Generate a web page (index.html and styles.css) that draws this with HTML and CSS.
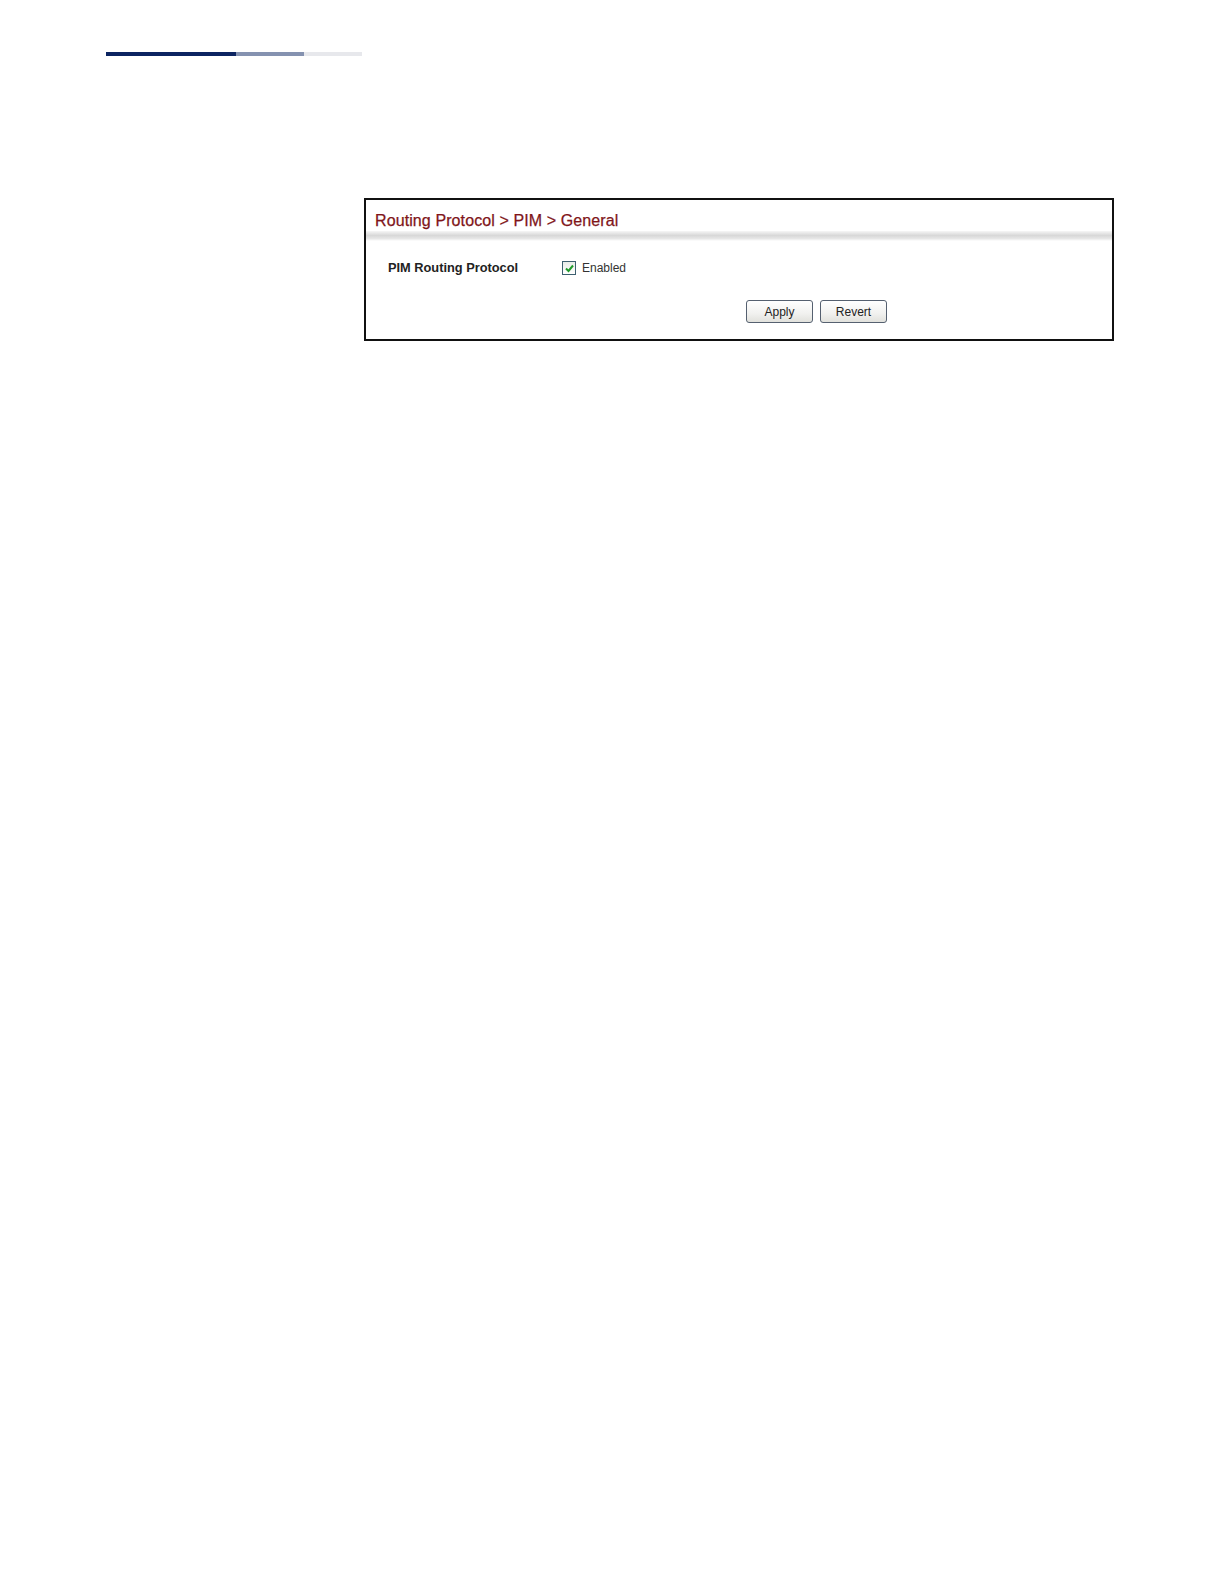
FILE: index.html
```html
<!DOCTYPE html>
<html>
<head>
<meta charset="utf-8">
<link rel="stylesheet" href="styles.css">
</head>
<body>
<div class="page">
  <div class="topbar">
    <span class="seg seg-dark"></span><span class="seg seg-mid"></span><span class="seg seg-light"></span>
  </div>
  <div class="panel">
    <div class="title">Routing Protocol &gt; PIM &gt; General</div>
    <div class="sep"></div>
    <div class="row">
      <div class="label">PIM Routing Protocol</div>
      <div class="field">
        <span class="check"><svg width="11" height="11" viewBox="0 0 11 11"><path d="M2 5.5 L4.5 8 L9 2.5" fill="none" stroke="#1f9a2a" stroke-width="2"/></svg></span>
        <span class="ctext">Enabled</span>
      </div>
    </div>
    <div class="buttons">
      <button class="btn">Apply</button>
      <button class="btn">Revert</button>
    </div>
  </div>
</div>
</body>
</html>
```
FILE: styles.css
```css
html, body { margin: 0; padding: 0; background: #fff; }
body { font-family: "Liberation Sans", Arial, sans-serif; }
.page { width: 1224px; height: 1584px; position: relative; }
.topbar { display: flex; padding: 52px 0 0 106px; height: 4px; }
.seg { display: block; height: 4px; }
.seg-dark { width: 130px; background: #0c2461; }
.seg-mid { width: 68px; background: #8592b0; }
.seg-light { width: 58px; background: #e7e8ec; }
.panel {
  margin: 142px 0 0 364px;
  width: 746px;
  height: 139px;
  border: 2px solid #111;
}
.title {
  color: #801519;
  font-size: 16px;
  letter-spacing: 0.1px;
  -webkit-text-stroke: 0.25px #801519;
  padding: 11px 0 0 9px;
  height: 20px;
  line-height: 20px;
}
.sep {
  margin-top: 0;
  height: 10px;
  background: linear-gradient(#f6f6f6, #d8d8d8 45%, #e6e6e6 75%, #fff);
}
.row { display: flex; align-items: center; padding: 17px 0 0 22px; height: 18px; }
.label { width: 174px; font-size: 12.8px; font-weight: bold; color: #222; }
.field { display: flex; align-items: center; position: relative; top: 1px; }
.check {
  width: 12px; height: 12px;
  border: 1px solid #3d6070;
  background: linear-gradient(#e8ece8, #fff);
  display: inline-flex; align-items: center; justify-content: center;
  margin-right: 6px;
}
.ctext { font-size: 12px; color: #333; }
.buttons { display: flex; gap: 7px; padding: 24px 0 0 380px; }
.btn {
  width: 67px; height: 23px;
  font-family: "Liberation Sans", Arial, sans-serif;
  font-size: 12px; color: #222;
  border: 1px solid #556070;
  border-radius: 3px;
  background: linear-gradient(#ffffff, #f1f1ef 60%, #e1e1dc);
  padding: 0;
}
```
